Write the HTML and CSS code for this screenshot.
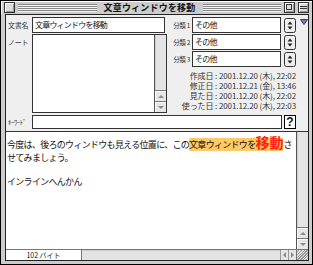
FILE: index.html
```html
<!DOCTYPE html>
<html lang="ja">
<head>
    <meta charset="UTF-8">
    <meta name="viewport" content="width=device-width, initial-scale=1.0">
    <title>文章ウィンドウを移動</title>
    <link rel="stylesheet" href="styles.css">
</head>
<body>
    <div class="window">
        <div class="titlebar">
            <span class="box close"></span>
            <span class="stripes"></span>
            <span class="title">文章ウィンドウを移動</span>
            <span class="stripes"></span>
            <span class="box zoom"></span>
            <span class="box collapse"></span>
        </div>
        <div class="frame">
            <div class="content">
                <div class="panel">
                    <div class="upper">
                        <div class="left">
                            <div class="row">
                                <span class="label">文書名</span>
                                <div class="field name">文章ウィンドウを移動</div>
                            </div>
                            <div class="row">
                                <span class="label">ノート</span>
                                <div class="note">
                                    <div class="note-body"></div>
                                    <div class="vscroll">
                                        <div class="track"></div>
                                        <div class="arrow"><span class="tri up"></span></div>
                                        <div class="arrow"><span class="tri down"></span></div>
                                    </div>
                                </div>
                            </div>
                        </div>
                        <div class="right">
                            <div class="cat">
                                <span class="cat-label">分類 1</span>
                                <div class="popup">その他</div>
                                <svg class="popbtn" width="12" height="15" viewBox="0 0 12 15">
                                    <rect x="0.5" y="0.5" width="11" height="14" rx="2" fill="#eee" stroke="#333"/>
                                    <path d="M6 3.5 L3.5 6.5 H8.5 Z M3.5 8.5 H8.5 L6 11.5 Z" fill="#222"/>
                                </svg>
                                <svg class="disclose" width="8" height="6" viewBox="0 0 8 6">
                                    <path d="M0.5 0.5 H7.5 L4 5.5 Z" fill="#7878c0" stroke="#3a3a70"/>
                                </svg>
                            </div>
                            <div class="cat">
                                <span class="cat-label">分類 2</span>
                                <div class="popup">その他</div>
                                <svg class="popbtn" width="12" height="15" viewBox="0 0 12 15">
                                    <rect x="0.5" y="0.5" width="11" height="14" rx="2" fill="#eee" stroke="#333"/>
                                    <path d="M6 3.5 L3.5 6.5 H8.5 Z M3.5 8.5 H8.5 L6 11.5 Z" fill="#222"/>
                                </svg>
                            </div>
                            <div class="cat">
                                <span class="cat-label">分類 3</span>
                                <div class="popup">その他</div>
                                <svg class="popbtn" width="12" height="15" viewBox="0 0 12 15">
                                    <rect x="0.5" y="0.5" width="11" height="14" rx="2" fill="#eee" stroke="#333"/>
                                    <path d="M6 3.5 L3.5 6.5 H8.5 Z M3.5 8.5 H8.5 L6 11.5 Z" fill="#222"/>
                                </svg>
                            </div>
                            <div class="dates">
                                <div>作成日 : 2001.12.20 (木), 22:02</div>
                                <div>修正日 : 2001.12.21 (金), 13:46</div>
                                <div>見た日 : 2001.12.20 (木), 22:02</div>
                                <div>使った日 : 2001.12.20 (木), 22:03</div>
                            </div>
                        </div>
                    </div>
                    <div class="row keyword">
                        <span class="label">ｷｰﾜｰﾄﾞ</span>
                        <div class="field kw"></div>
                        <div class="help">?</div>
                    </div>
                </div>
                <div class="doc">
                    <div class="text">今度は、後ろのウィンドウも見える位置に、この<span class="hl">文章ウィンドウを<b class="big">移動</b></span>さ<br>せてみましょう。<br><br>インラインへんかん</div>
                    <div class="vscroll wide">
                        <div class="track"></div>
                        <div class="arrow"><span class="tri up"></span></div>
                        <div class="arrow"><span class="tri down"></span></div>
                    </div>
                </div>
                <div class="status">
                    <div class="size">102 バイト</div>
                    <div class="hscroll"></div>
                    <div class="harrow"><span class="tri left"></span></div>
                    <div class="harrow"><span class="tri rightt"></span></div>
                    <div class="grow"></div>
                </div>
            </div>
        </div>
    </div>
</body>
</html>
```

FILE: styles.css
```css
body{
    margin: 0;
    padding: 0;
    background-color: #fff;
    font-family: "Noto Sans CJK JP", sans-serif;
    color: #111;
}

.window{
    width: 313px;
    height: 265px;
    box-sizing: border-box;
    border: 1px solid #000;
    background-color: #cccccc;
    display: flex;
    flex-direction: column;
}

/* title bar */
.titlebar{
    height: 13px;
    display: flex;
    align-items: center;
    padding: 0 3px 0 3px;
    gap: 3px;
    box-shadow: inset 1px 1px #fff;
}

.stripes{
    flex: 1;
    height: 8px;
    background: repeating-linear-gradient(to bottom, #888 0 1px, #f4f4f4 1px 2px);
}

.title{
    font-size: 9px;
    font-weight: bold;
    line-height: 12px;
    padding: 0 4px;
    letter-spacing: 0.2px;
}

.box{
    width: 9px;
    height: 9px;
    border: 1px solid #333;
    background-color: #ddd;
    box-shadow: inset 1px 1px #fff, inset -1px -1px #999;
    position: relative;
}

.zoom::after{
    content: "";
    position: absolute;
    left: 1px;
    top: 1px;
    width: 4px;
    height: 4px;
    border: 1px solid #333;
}

.collapse::after{
    content: "";
    position: absolute;
    left: 1px;
    right: 1px;
    top: 3px;
    height: 1px;
    border-top: 1px solid #333;
    border-bottom: 1px solid #333;
}

.frame{
    flex: 1;
    padding: 0 4px 3px 4px;
    display: flex;
}

.content{
    flex: 1;
    border: 1px solid #222;
    display: flex;
    flex-direction: column;
    background-color: #fff;
}

/* upper panel */
.panel{
    height: 116px;
    box-sizing: border-box;
    padding-top: 2px;
    background-color: #efefef;
}

.upper{
    display: flex;
    height: 96px;
}

.left{
    width: 161px;
    display: flex;
    flex-direction: column;
    gap: 1px;
}

.row{
    display: flex;
    align-items: flex-start;
}

.label{
    width: 24px;
    padding-left: 2px;
    font-size: 7px;
    line-height: 16px;
    letter-spacing: -0.3px;
    color: #333;
}

.field{
    box-sizing: border-box;
    height: 16px;
    border: 1px solid #333;
    background-color: #fff;
    font-size: 8px;
    line-height: 14px;
    padding-left: 2px;
    letter-spacing: -0.8px;
}

.field.name{
    width: 133px;
}

.note{
    width: 135px;
    height: 79px;
    box-sizing: border-box;
    border: 1px solid #333;
    background-color: #fff;
    display: flex;
}

.note-body{
    flex: 1;
}

.vscroll{
    width: 11px;
    border-left: 1px solid #555;
    display: flex;
    flex-direction: column;
}

.vscroll.wide{
    width: 11px;
}

.track{
    flex: 1;
    background-color: #e4e4e4;
    box-shadow: inset 1px 0 #ccc;
}

.arrow{
    height: 10px;
    border-top: 1px solid #777;
    background-color: #e6e6e6;
    box-shadow: inset 1px 1px #fff;
    display: flex;
    align-items: center;
    justify-content: center;
}

.tri{
    width: 0;
    height: 0;
    border: 3px solid transparent;
}

.tri.up{
    border-bottom-color: #8a8a8a;
    border-top-width: 0;
}

.tri.down{
    border-top-color: #8a8a8a;
    border-bottom-width: 0;
}

.tri.left{
    border-right-color: #8a8a8a;
    border-left-width: 0;
}

.tri.rightt{
    border-left-color: #8a8a8a;
    border-right-width: 0;
}

.right{
    flex: 1;
    display: flex;
    flex-direction: column;
    gap: 1px;
}

.cat{
    display: flex;
    align-items: center;
    height: 16px;
}

.cat-label{
    width: 23px;
    margin-right: 2px;
    text-align: right;
    font-size: 6.5px;
    color: #333;
    letter-spacing: -0.3px;
    white-space: nowrap;
}

.popup{
    width: 89px;
    height: 16px;
    box-sizing: border-box;
    border: 1px solid #333;
    background-color: #fff;
    font-size: 8px;
    line-height: 14px;
    padding-left: 2px;
    letter-spacing: -0.8px;
}

.popbtn{
    margin-left: 3px;
}

.disclose{
    margin-left: 4px;
    align-self: flex-start;
    margin-top: 2px;
}

.dates{
    margin-top: 3px;
    padding-right: 12px;
    text-align: right;
    font-size: 8px;
    line-height: 10px;
    color: #333;
    letter-spacing: -0.1px;
    white-space: nowrap;
}

.keyword{
    margin-top: 2px;
    align-items: center;
}

.keyword .label{
    line-height: 14px;
    font-size: 6.5px;
}

.field.kw{
    width: 250px;
    height: 14px;
}

.help{
    margin-left: 2px;
    width: 12px;
    height: 14px;
    box-sizing: border-box;
    border: 1px solid #000;
    background-color: #fff;
    font-family: "Liberation Sans", sans-serif;
    font-weight: bold;
    font-size: 12px;
    line-height: 12px;
    text-align: center;
}

/* document */
.doc{
    flex: 1;
    border-top: 1px solid #333;
    display: flex;
}

.text{
    flex: 1;
    padding: 3px 0 0 1px;
    font-size: 9px;
    line-height: 12px;
    letter-spacing: -0.7px;
    color: #111;
}

.hl{
    background-color: #ffc966;
    line-height: 15px;
}

.big{
    font-size: 14px;
    color: #ff2010;
    letter-spacing: 0;
    line-height: 15px;
}

.status{
    height: 10px;
    border-top: 1px solid #777;
    display: flex;
}

.size{
    width: 75px;
    border-right: 1px solid #777;
    background-color: #fff;
    font-size: 7px;
    line-height: 10px;
    text-align: center;
}

.hscroll{
    flex: 1;
    background-color: #e4e4e4;
    box-shadow: inset 0 1px #ccc;
}

.harrow{
    width: 7px;
    border-left: 1px solid #999;
    background-color: #e6e6e6;
    display: flex;
    align-items: center;
    justify-content: center;
}

.grow{
    width: 11px;
    border-left: 1px solid #777;
    background: repeating-linear-gradient(135deg, #ddd 0 1px, #999 1px 2px);
}
```
